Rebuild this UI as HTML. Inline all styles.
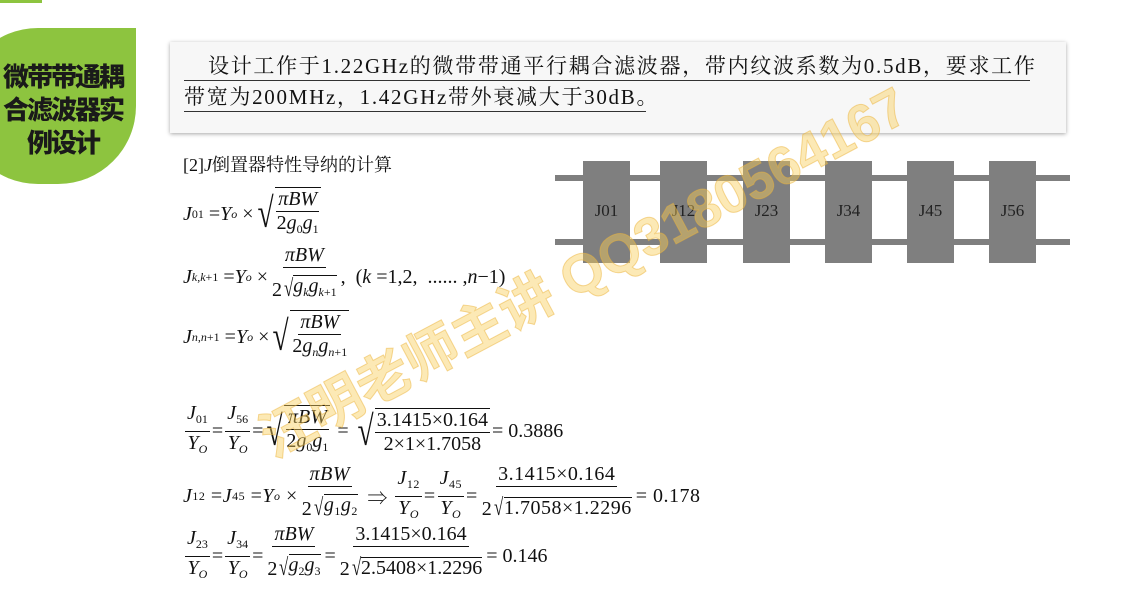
<!DOCTYPE html>
<html><head><meta charset="utf-8"><style>
*{margin:0;padding:0;box-sizing:border-box}
body{width:1128px;height:590px;background:#fff;position:relative;overflow:hidden;font-family:"Liberation Serif","Noto Serif CJK SC",serif;color:#111}
.a{position:absolute}
.leaf{left:-40px;top:28px;width:176px;height:156px;background:#8dc43f;border-radius:90px 0 90px 90px}
.lt{left:-4px;top:61px;width:134px;text-align:center;font-family:"Liberation Sans","Noto Sans CJK SC",sans-serif;font-weight:900;font-size:26px;line-height:33px;color:#1a1a1a;letter-spacing:-2px}
.card{left:170px;top:42px;width:896px;height:91px;background:#f7f7f7;box-shadow:0 1px 4px rgba(0,0,0,.35)}
.ct{left:184px;font-size:21px;letter-spacing:1.7px;border-bottom:1px solid #333;line-height:27px;white-space:nowrap}
.bar{background:#7f7f7f;height:6px;left:555px;width:515px}
.blk{background:#7f7f7f;top:161px;width:47px;height:102px;font-size:17px;text-align:center;line-height:100px;color:#222}
.m{position:absolute;display:flex;align-items:center;font-size:20px;white-space:nowrap}
.fr{display:inline-flex;flex-direction:column;align-items:center;margin:0 2px}
.fr>span{display:block;line-height:23px;padding:0 2px}
.fr>span:first-child{border-bottom:1px solid #111}
i{font-style:italic}
sub{font-size:12px;vertical-align:-4px}
.sq{display:inline-flex;align-items:center}
.sq>b{font-weight:normal;font-size:42px;transform:scaleX(.7);margin-right:-4px;line-height:42px}
.sq>.in{border-top:1px solid #111}
.ss>b{font-size:24px;margin-right:-2px}
.ss>.in{border-top:1px solid #111;line-height:21px}
.wm{left:262px;top:398px;font-family:"Liberation Sans","Noto Sans CJK SC",sans-serif;font-weight:bold;font-size:54px;color:rgba(248,206,90,.45);transform:rotate(-28deg);transform-origin:left center;white-space:nowrap;-webkit-text-stroke:1px rgba(235,180,60,.5)}
</style></head><body>
<div class="a" style="left:0;top:0;width:42px;height:3px;background:#8dc43f"></div>
<div class="a leaf"></div>
<div class="a lt">微带带通耦<br>合滤波器实<br>例设计</div>
<div class="a card"></div>
<div class="a ct" style="top:53px;width:846px;padding-left:24px">设计工作于1.22GHz的微带带通平行耦合滤波器，带内纹波系数为0.5dB，要求工作</div>
<div class="a ct" style="top:84px;width:462px">带宽为200MHz，1.42GHz带外衰减大于30dB。</div>
<div class="a" style="left:183px;top:151px;font-size:18px">[2]<i>J</i>倒置器特性导纳的计算</div>

<div class="a bar" style="top:175px"></div>
<div class="a bar" style="top:239px"></div>
<div class="a blk" style="left:583px">J01</div>
<div class="a blk" style="left:660px">J12</div>
<div class="a blk" style="left:743px">J23</div>
<div class="a blk" style="left:825px">J34</div>
<div class="a blk" style="left:907px">J45</div>
<div class="a blk" style="left:989px">J56</div>

<div class="m" style="left:183px;top:187px"><i>J</i><sub>01</sub>&nbsp;= <i>Y</i><sub><i>o</i></sub>&nbsp;× <span class="sq"><b>√</b><span class="in fr"><span><i>πBW</i></span><span>2<i>g</i><sub>0</sub><i>g</i><sub>1</sub></span></span></span></div>
<div class="m" style="left:183px;top:244px"><i>J</i><sub><i>k</i>,<i>k</i>+1</sub>&nbsp;= <i>Y</i><sub><i>o</i></sub>&nbsp;× <span class="fr"><span><i>πBW</i></span><span>2<span class="sq ss"><b>√</b><span class="in"><i>g</i><sub><i>k</i></sub><i>g</i><sub><i>k</i>+1</sub></span></span></span></span>,&nbsp;&nbsp;(<i>k</i>&nbsp;=1,2,&nbsp; ...... ,<i>n</i>−1)</div>
<div class="m" style="left:183px;top:310px"><i>J</i><sub><i>n</i>,<i>n</i>+1</sub>&nbsp;= <i>Y</i><sub><i>o</i></sub>&nbsp;× <span class="sq"><b>√</b><span class="in fr"><span><i>πBW</i></span><span>2<i>g</i><sub><i>n</i></sub><i>g</i><sub><i>n</i>+1</sub></span></span></span></div>

<div class="m" style="left:183px;top:402px"><span class="fr"><span><i>J</i><sub>01</sub></span><span><i>Y<sub>O</sub></i></span></span>=<span class="fr"><span><i>J</i><sub>56</sub></span><span><i>Y<sub>O</sub></i></span></span>=<span class="sq"><b>√</b><span class="in fr"><span><i>πBW</i></span><span>2<i>g</i><sub>0</sub><i>g</i><sub>1</sub></span></span></span>&nbsp;=&nbsp;<span class="sq"><b>√</b><span class="in fr"><span>3.1415×0.164</span><span>2×1×1.7058</span></span></span>= 0.3886</div>
<div class="m" style="left:183px;top:463px;letter-spacing:0.5px"><i>J</i><sub>12</sub>&nbsp;= <i>J</i><sub>45</sub>&nbsp;= <i>Y</i><sub><i>o</i></sub>&nbsp;× <span class="fr"><span><i>πBW</i></span><span>2<span class="sq ss"><b>√</b><span class="in"><i>g</i><sub>1</sub><i>g</i><sub>2</sub></span></span></span></span>&nbsp;⇒&nbsp;<span class="fr"><span><i>J</i><sub>12</sub></span><span><i>Y<sub>O</sub></i></span></span>=<span class="fr"><span><i>J</i><sub>45</sub></span><span><i>Y<sub>O</sub></i></span></span>=<span class="fr"><span>3.1415×0.164</span><span>2<span class="sq ss"><b>√</b><span class="in">1.7058×1.2296</span></span></span></span>= 0.178</div>
<div class="m" style="left:183px;top:523px"><span class="fr"><span><i>J</i><sub>23</sub></span><span><i>Y<sub>O</sub></i></span></span>=<span class="fr"><span><i>J</i><sub>34</sub></span><span><i>Y<sub>O</sub></i></span></span>=<span class="fr"><span><i>πBW</i></span><span>2<span class="sq ss"><b>√</b><span class="in"><i>g</i><sub>2</sub><i>g</i><sub>3</sub></span></span></span></span>=<span class="fr"><span>3.1415×0.164</span><span>2<span class="sq ss"><b>√</b><span class="in">2.5408×1.2296</span></span></span></span>= 0.146</div>

<div class="a wm">汪明老师主讲 QQ3180564167</div>
</body></html>
